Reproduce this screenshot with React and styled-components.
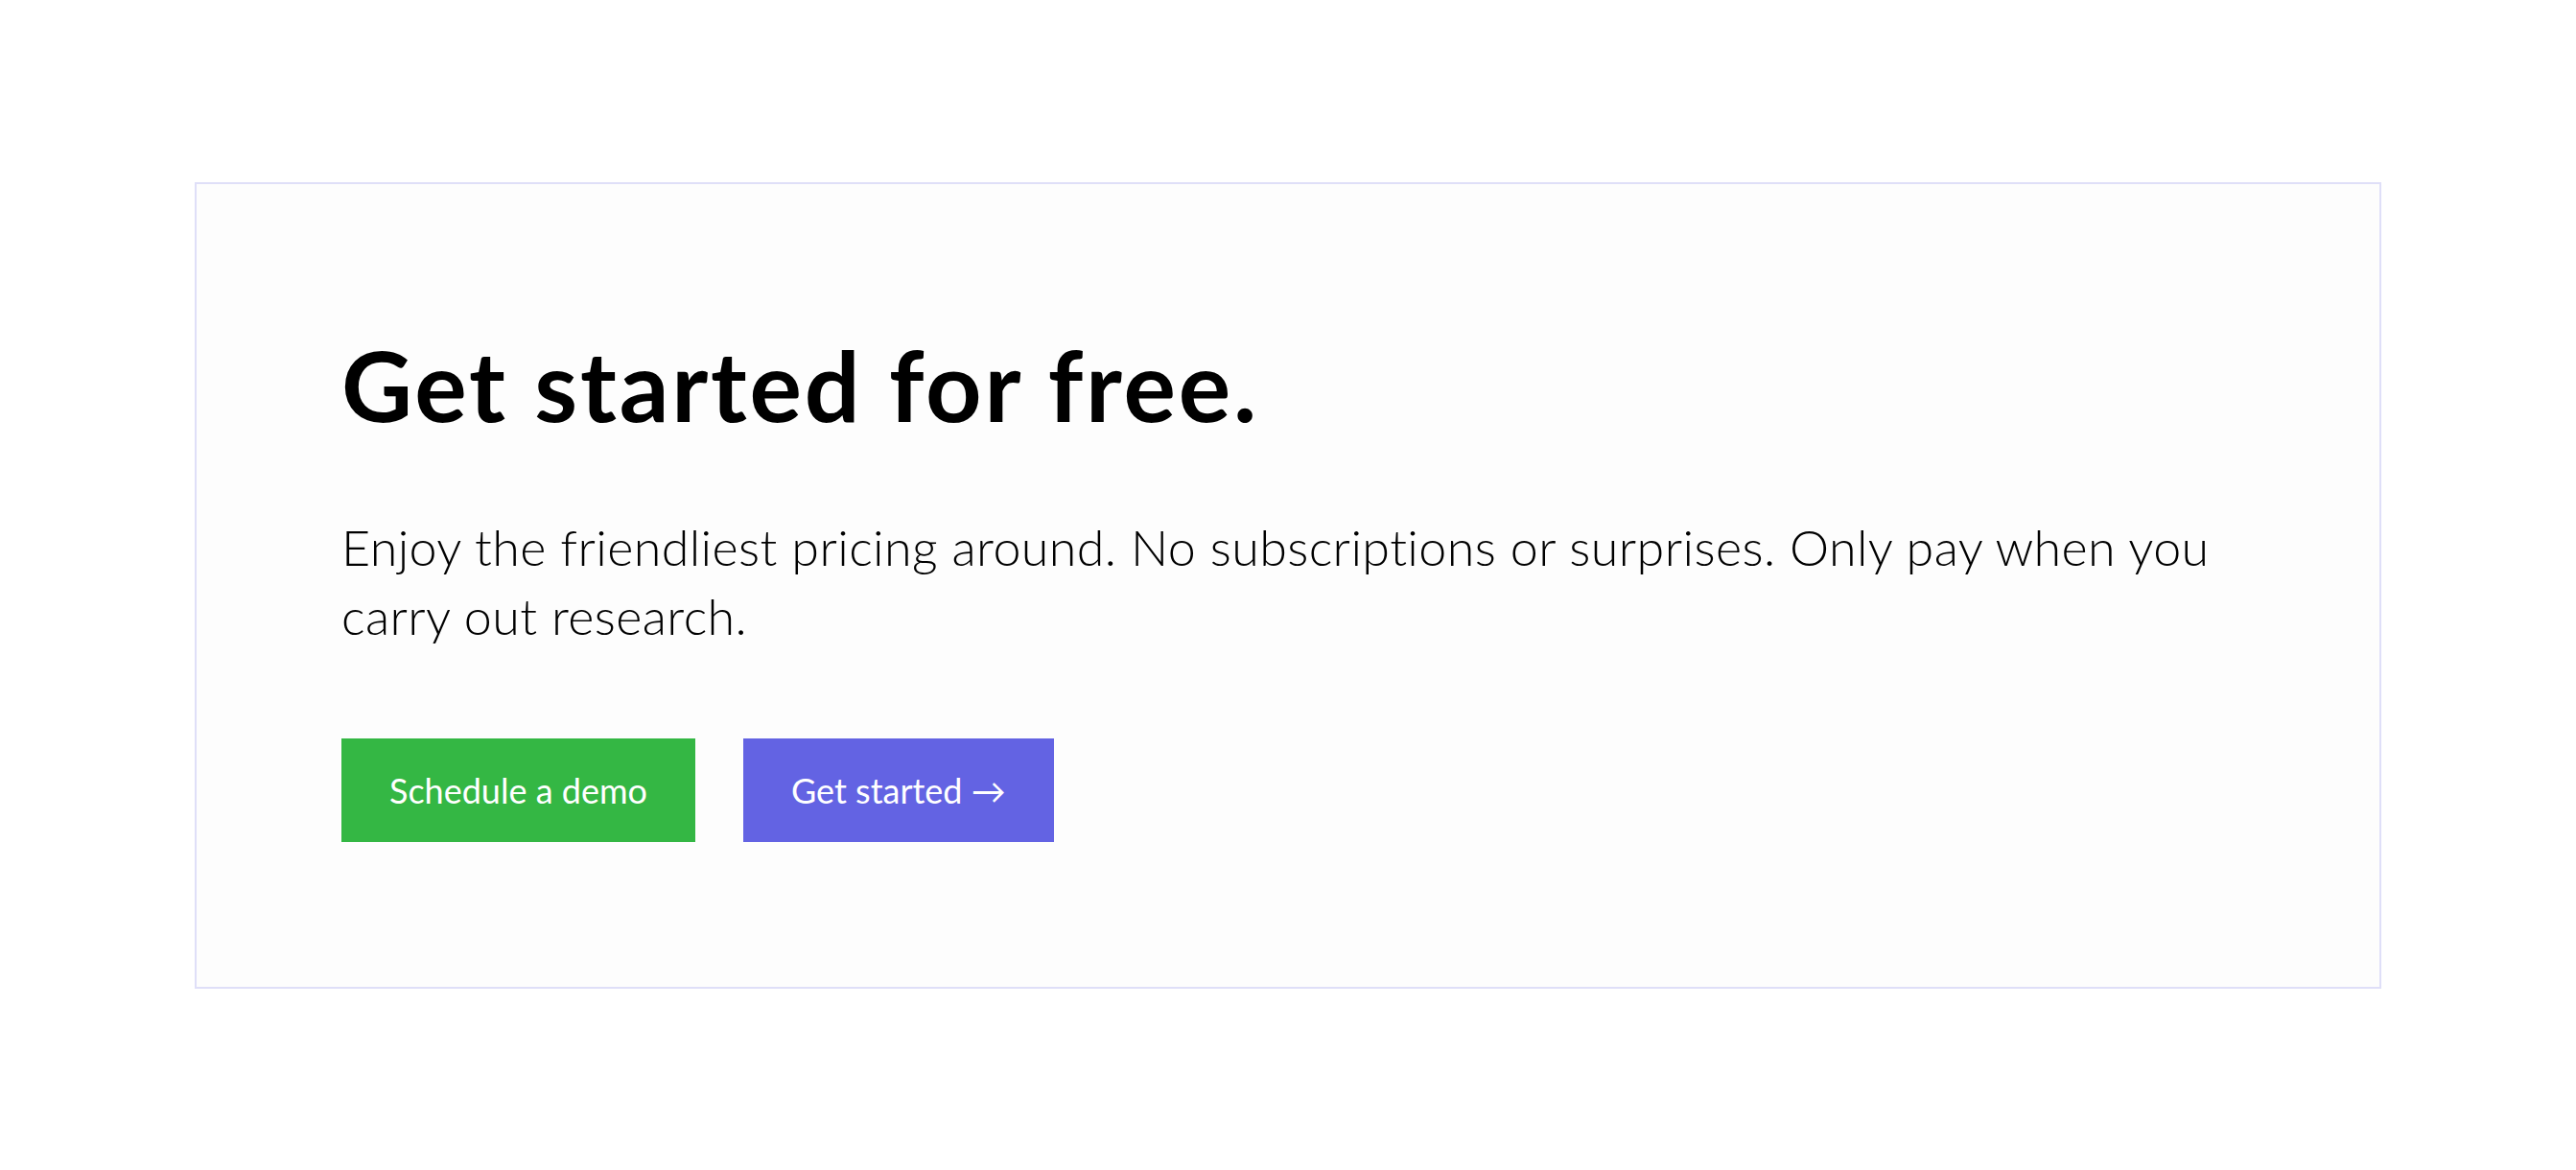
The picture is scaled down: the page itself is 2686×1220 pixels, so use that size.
import React from "react";
import styled, { createGlobalStyle } from "styled-components";

const Global = createGlobalStyle`
  html, body { margin: 0; padding: 0; background: #ffffff; }
  body { font-family: Lato, "Open Sans", sans-serif; color: #000; }
`;

const Page = styled.main`
  padding: 190px 203px;
  box-sizing: border-box;
`;

const Card = styled.section`
  background: #fdfdfd;
  border: 2px solid #dfdff8;
  padding: 148px 151px 151px;
  display: flex;
  flex-direction: column;
`;

const Title = styled.h1`
  margin: 0;
  font-family: Lato, sans-serif;
  font-weight: 700;
  font-size: 102px;
  line-height: 1.2;
  letter-spacing: 2.8px;
`;

const Lead = styled.p`
  margin: 72px 0 0;
  font-family: Lato, sans-serif;
  font-weight: 300;
  font-size: 52px;
  line-height: 72px;
  letter-spacing: 0.4px;
  max-width: 1976px;
`;

const Actions = styled.div`
  display: flex;
  gap: 50px;
  margin-top: 92px;
`;

const Button = styled.a`
  display: inline-flex;
  align-items: center;
  justify-content: center;
  height: 108px;
  padding: 0 50px;
  box-sizing: border-box;
  background: ${(p) => (p.$variant === "primary" ? "#6363e3" : "#34b744")};
  color: #ffffff;
  font-family: Lato, sans-serif;
  font-weight: 400;
  font-size: 36px;
  text-decoration: none;
  white-space: nowrap;
`;

export default function App() {
  return (
    <>
      <Global />
      <Page>
        <Card>
          <Title>Get started for free.</Title>
          <Lead>
            Enjoy the friendliest pricing around. No subscriptions or surprises. Only pay when you carry out research.
          </Lead>
          <Actions>
            <Button href="#" $variant="secondary">Schedule a demo</Button>
            <Button href="#" $variant="primary">Get started →</Button>
          </Actions>
        </Card>
      </Page>
    </>
  );
}
